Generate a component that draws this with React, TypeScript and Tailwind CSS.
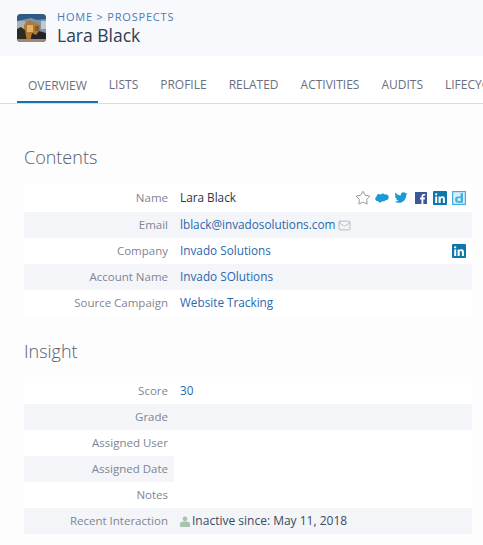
import { Mail, Star } from "lucide-react";
import type { ReactNode } from "react";

const font = "font-['Open_Sans',sans-serif]";

function Avatar() {
  return (
    <svg viewBox="0 0 29 28" className="w-[29px] h-[28px] rounded-[4px] shrink-0">
      <rect width="29" height="28" fill="#7d93a8" />
      <path d="M0 0h29v5l-9 1-6-2-14 3z" fill="#2f5a86" />
      <path d="M0 7l8 0v8H0z" fill="#a9b4ba" />
      <path d="M7 28V11l5-5 4 2 7 3v17z" fill="#b5782f" />
      <path d="M10 11h6v7h-6z" fill="#e3b06a" />
      <path d="M18 12h4v5h-4z" fill="#8a5a2a" />
      <path d="M0 15l4-2 4 3 2 12H0z" fill="#2e2c22" />
      <path d="M13 28l2-9 4 2 3-4 7 2v9z" fill="#232326" />
      <path d="M24 7h5v8h-5z" fill="#c2c8cc" />
      <path d="M0 25h29v3H0z" fill="#9a8a78" />
    </svg>
  );
}

function LinkedIn() {
  return (
    <svg viewBox="0 0 14 14" className="w-[14px] h-[14px]">
      <rect width="14" height="14" rx="1" fill="#0e76a8" />
      <path d="M2.2 5.4h2V12h-2zM3.2 2.2a1.1 1.1 0 110 2.3 1.1 1.1 0 010-2.3zM5.6 5.4h1.9v.9c.4-.6 1.1-1.1 2.1-1.1 1.8 0 2.3 1.2 2.3 2.9V12h-2V8.5c0-.8-.2-1.5-1-1.5s-1.2.6-1.2 1.5V12h-2.1z" fill="#fff" />
    </svg>
  );
}

function SocialIcons() {
  return (
    <div className="flex items-center gap-[5px]">
      <Star className="w-[16px] h-[16px] text-[#7f858f] -mr-px" strokeWidth={1.3} />
      <svg viewBox="0 0 16 10" className="w-[14px] h-[10px]">
        <path d="M6.6 1.2A2.8 2.8 0 0111 .9a3.3 3.3 0 014.6 3 3.2 3.2 0 01-3.9 3.6 2.4 2.4 0 01-3.2 1 2.8 2.8 0 01-5.2-.2A2.5 2.5 0 011.7 3.6a2.9 2.9 0 014.9-2.4z" fill="#1a9ad6" />
      </svg>
      <svg viewBox="0 0 24 24" className="w-[14px] h-[13px]">
        <path d="M23.9 4.6a9.8 9.8 0 01-2.8.8 4.9 4.9 0 002.1-2.7 9.9 9.9 0 01-3.1 1.2 4.9 4.9 0 00-8.4 4.5A14 14 0 011.7 3.2a4.9 4.9 0 001.5 6.6 4.9 4.9 0 01-2.2-.6c0 2.3 1.6 4.4 3.9 4.9a4.9 4.9 0 01-2.2.1 4.9 4.9 0 004.6 3.4A9.9 9.9 0 010 19.6 14 14 0 007.5 21.8c9.1 0 14.3-7.7 14-14.6a10 10 0 002.4-2.6z" fill="#1a9ad6" />
      </svg>
      <svg viewBox="0 0 12 12" className="w-[12px] h-[12px] ml-[2px]">
        <rect width="12" height="12" fill="#3b5998" />
        <path d="M8.3 12V7.4h1.5l.2-1.8H8.3V4.5c0-.5.2-.9.9-.9h1V2c-.2 0-.8-.1-1.4-.1-1.4 0-2.3.8-2.3 2.4v1.3H5v1.8h1.5V12z" fill="#fff" />
      </svg>
      <div className="ml-px">
        <LinkedIn />
      </div>
      <svg viewBox="0 0 14 14" className="w-[14px] h-[14px]">
        <rect x=".6" y=".6" width="12.8" height="12.8" fill="#d6eff9" stroke="#3fb0e0" strokeWidth="1.2" />
        <path d="M8.6 2.2h2.4v9.6H6.3a3.2 3.2 0 110-6.4h2.3zM8.6 7.1H6.7a1.5 1.5 0 100 3h1.9z" fill="#3fb0e0" />
      </svg>
    </div>
  );
}

function Row({ label, children, right, striped, short, height = "h-[26px]" }: { label: string; children?: ReactNode; right?: ReactNode; striped?: boolean; short?: boolean; height?: string }) {
  return (
    <div className={`flex ${height} items-center ${striped && !short ? "bg-[#f3f5f9]" : ""}`}>
      <div className={`w-[150px] h-full shrink-0 flex items-center justify-end pr-[6px] text-[11.5px] text-[#7f8593] ${striped && short ? "bg-[#f3f5f9]" : ""}`}>
        {label}
      </div>
      <div className="flex-1 min-w-0 flex items-center justify-between pl-[6px] pr-[6px] text-[11.75px] text-[#2b68ad]">
        <div className="flex items-center">{children}</div>
        {right}
      </div>
    </div>
  );
}

export default function App() {
  const tabs = ["Overview", "Lists", "Profile", "Related", "Activities", "Audits", "Lifecycle"];

  return (
    <div className={`${font} w-[483px] h-[545px] overflow-hidden bg-[#fdfdfe] text-[12px]`}>
      {/* Header */}
      <header className="h-[56px] bg-[#f7f9fc] flex items-center pl-[17px] pb-px gap-[11px]">
        <Avatar />
        <div>
          <div className="text-[11px] leading-[14px] tracking-[0.8px] text-[#4a7cb5]">HOME &gt; PROSPECTS</div>
          <div className="text-[17.5px] leading-[22px] text-[#2f3d55]">Lara Black</div>
        </div>
      </header>

      {/* Tabs */}
      <nav className="h-[48px] bg-white border-b border-[#d8dbe0] pl-[17px] flex items-end overflow-hidden">
        {tabs.map((t, i) => (
          <div
            key={t}
            className={`h-[32px] shrink-0 pt-[5px] px-[11px] whitespace-nowrap uppercase text-[12px] text-[#696f80] ${i === 0 ? "border-b-[3px] border-[#1a6fad] -mb-px" : ""}`}
          >
            {t}
          </div>
        ))}
      </nav>

      {/* Contents */}
      <section className="pl-[24px] pr-[11px]">
        <h2 className="mt-[41px] h-[24px] leading-[24px] text-[18px] font-light text-[#565c6b]">Contents</h2>
        <div className="mt-[14px] bg-white">
          <Row label="Name" height="h-[29px]" right={<SocialIcons />}>
            <span className="text-[#2f3648]">Lara Black</span>
          </Row>
          <Row label="Email" striped>
            lblack@invadosolutions.com
            <Mail className="w-[13px] h-[13px] ml-[3px] text-[#9a9ea6]" strokeWidth={1.2} />
          </Row>
          <Row label="Company" right={<LinkedIn />}>Invado Solutions</Row>
          <Row label="Account Name" striped>Invado SOlutions</Row>
          <Row label="Source Campaign">Website Tracking</Row>
        </div>
      </section>

      {/* Insight */}
      <section className="pl-[24px] pr-[11px]">
        <h2 className="mt-[23px] h-[24px] leading-[24px] text-[18px] font-light text-[#565c6b]">Insight</h2>
        <div className="mt-[14px] bg-white">
          <Row label="Score" height="h-[27px]">30</Row>
          <Row label="Grade" striped />
          <Row label="Assigned User" />
          <Row label="Assigned Date" striped short />
          <Row label="Notes" />
          <Row label="Recent Interaction" striped>
            <svg viewBox="0 0 10 11" className="w-[10px] h-[11px] mr-[2px]">
              <circle cx="5" cy="2.8" r="2.4" fill="#a9c3ac" />
              <path d="M0 11V8.2c0-1.6 1.4-2.4 3-2.6h4c1.6.2 3 1 3 2.6V11z" fill="#a9c3ac" />
            </svg>
            <span className="text-[12px] text-[#3a4a60]">Inactive since: May 11, 2018</span>
          </Row>
        </div>
      </section>
    </div>
  );
}
